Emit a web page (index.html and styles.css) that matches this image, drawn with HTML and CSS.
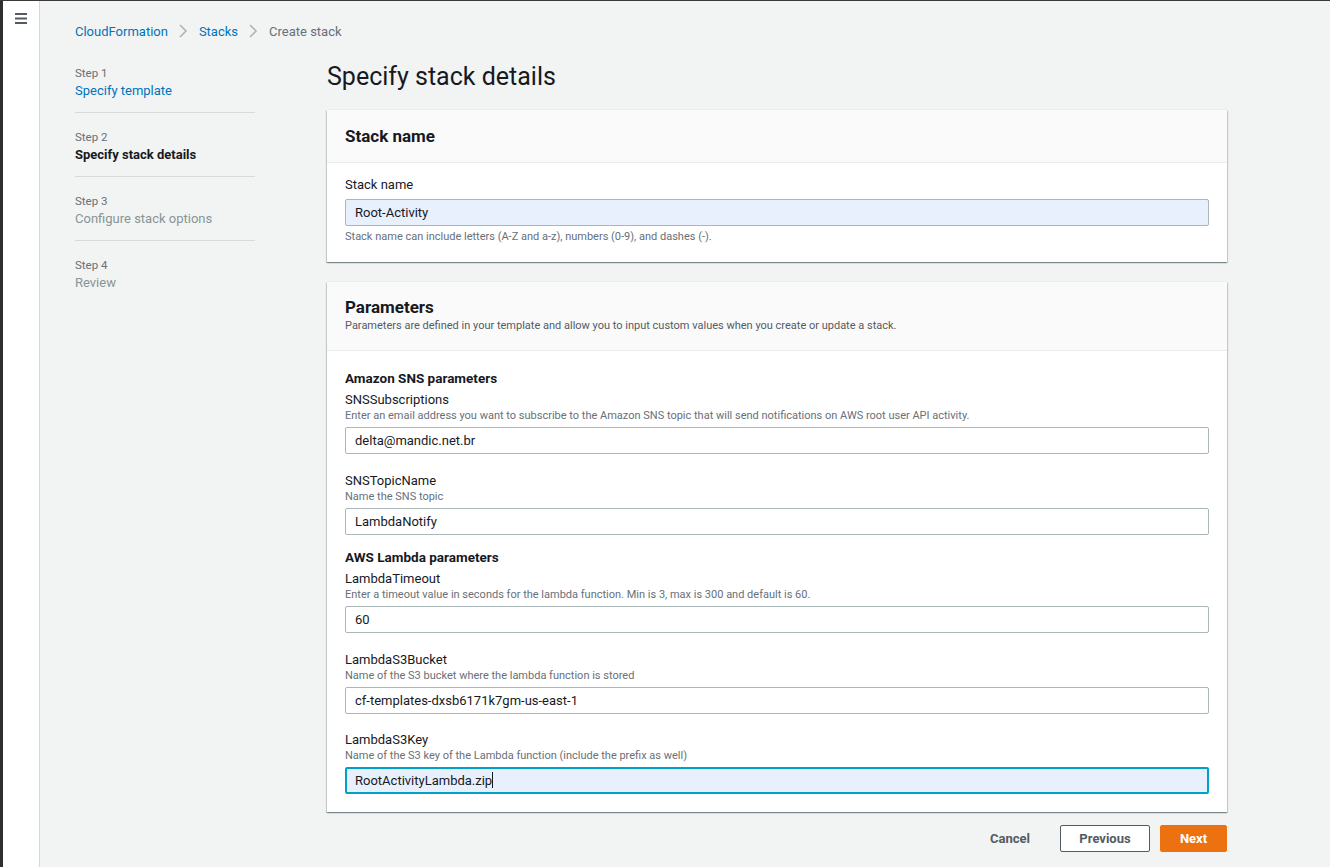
FILE: index.html
```html
<!DOCTYPE html>
<html lang="en">
<head>
<meta charset="utf-8">
<title>Create stack - CloudFormation</title>
<link rel="stylesheet" href="styles.css">
</head>
<body>
<div class="app">
  <aside class="rail">
    <button class="menu" aria-label="Open navigation">
      <svg width="12" height="11" viewBox="0 0 12 11"><rect x="0" y="0" width="12" height="2" fill="#545b64"/><rect x="0" y="4.5" width="12" height="2" fill="#545b64"/><rect x="0" y="9" width="12" height="2" fill="#545b64"/></svg>
    </button>
  </aside>
  <div class="content">
    <nav class="crumbs">
      <a class="crumb-link" href="#">CloudFormation</a>
      <svg class="chev" width="10" height="16" viewBox="0 0 10 16"><path d="M2 2l6 6-6 6" fill="none" stroke="#aab7b8" stroke-width="1.6"/></svg>
      <a class="crumb-link" href="#">Stacks</a>
      <svg class="chev" width="10" height="16" viewBox="0 0 10 16"><path d="M2 2l6 6-6 6" fill="none" stroke="#aab7b8" stroke-width="1.6"/></svg>
      <span class="crumb-current">Create stack</span>
    </nav>
    <div class="layout">
      <ol class="steps">
        <li class="step"><div class="step-num">Step 1</div><a class="step-name link" href="#">Specify template</a></li>
        <li class="step"><div class="step-num">Step 2</div><div class="step-name current">Specify stack details</div></li>
        <li class="step"><div class="step-num">Step 3</div><div class="step-name disabled">Configure stack options</div></li>
        <li class="step last"><div class="step-num">Step 4</div><div class="step-name disabled">Review</div></li>
      </ol>
      <main class="main">
        <h1 class="title">Specify stack details</h1>
        <section class="card">
          <header class="card-head"><h2 class="card-title">Stack name</h2></header>
          <div class="card-body first">
            <label class="label">Stack name</label>
            <input class="input filled" value="Root-Activity">
            <div class="hint hint-below">Stack name can include letters (A-Z and a-z), numbers (0-9), and dashes (-).</div>
          </div>
        </section>
        <section class="card">
          <header class="card-head two">
            <h2 class="card-title">Parameters</h2>
            <p class="card-desc">Parameters are defined in your template and allow you to input custom values when you create or update a stack.</p>
          </header>
          <div class="card-body params">
            <h3 class="group">Amazon SNS parameters</h3>
            <div class="field">
              <label class="label">SNSSubscriptions</label>
              <div class="hint">Enter an email address you want to subscribe to the Amazon SNS topic that will send notifications on AWS root user API activity.</div>
              <input class="input" value="delta@mandic.net.br">
            </div>
            <div class="field">
              <label class="label">SNSTopicName</label>
              <div class="hint">Name the SNS topic</div>
              <input class="input" value="LambdaNotify">
            </div>
            <h3 class="group g2">AWS Lambda parameters</h3>
            <div class="field">
              <label class="label">LambdaTimeout</label>
              <div class="hint">Enter a timeout value in seconds for the lambda function. Min is 3, max is 300 and default is 60.</div>
              <input class="input" value="60">
            </div>
            <div class="field">
              <label class="label">LambdaS3Bucket</label>
              <div class="hint">Name of the S3 bucket where the lambda function is stored</div>
              <input class="input" value="cf-templates-dxsb6171k7gm-us-east-1">
            </div>
            <div class="field last-field">
              <label class="label">LambdaS3Key</label>
              <div class="hint">Name of the S3 key of the Lambda function (include the prefix as well)</div>
              <div class="input filled focused">RootActivityLambda.zip<span class="caret"></span></div>
            </div>
          </div>
        </section>
        <div class="actions">
          <button class="btn btn-link">Cancel</button>
          <button class="btn btn-normal">Previous</button>
          <button class="btn btn-primary">Next</button>
        </div>
      </main>
    </div>
  </div>
</div>
</body>
</html>
```

FILE: styles.css
```css
* { box-sizing: border-box; }
html, body { margin: 0; padding: 0; }
body {
  font-family: Roboto, "Noto Sans", "Liberation Sans", sans-serif;
  background: #f2f3f3;
  color: #16191f;
  font-size: 13px;
  border-top: 1px solid #3a3a3a;
}
.app {
  display: flex;
  min-height: 866px;
  border-left: 3px solid #2f2f2f;
}
.rail {
  width: 37px;
  flex: none;
  background: #fff;
  border-right: 1px solid #d5dbdb;
}
.menu {
  border: 0;
  background: none;
  padding: 0;
  margin: 12px 0 0 12px;
  display: block;
  line-height: 0;
}
.content {
  flex: 1;
  padding: 19px 35px 0 35px;
}
.crumbs {
  display: flex;
  align-items: center;
  height: 22px;
  font-size: 13px;
}
.crumb-link { color: #0073bb; text-decoration: none; }
.crumb-current { color: #687078; }
.chev { margin: 0 11px 0 10px; }
.layout {
  display: grid;
  grid-template-columns: 180px 900px;
  column-gap: 72px;
  margin-top: 20px;
}
.steps {
  list-style: none;
  margin: 0;
  padding: 3px 0 0 0;
}
.step {
  padding: 0 0 12px 0;
  border-bottom: 1px solid #d5dbdb;
  margin-bottom: 16px;
}
.step.last { border-bottom: 0; }
.step-num {
  font-size: 11.5px;
  line-height: 16px;
  color: #687078;
}
.step-name {
  display: block;
  font-size: 13px;
  line-height: 19px;
}
.step-name.link { color: #0073bb; text-decoration: none; }
.step-name.current { font-weight: 700; color: #16191f; }
.step-name.disabled { color: #879596; }
.title {
  margin: 0;
  font-size: 25px;
  line-height: 30px;
  font-weight: 400;
  color: #16191f;
}
.card {
  background: #fff;
  margin-top: 18px;
  box-shadow: 0 1px 1px 0 rgba(0,28,36,0.3), 1px 1px 1px 0 rgba(0,28,36,0.15), -1px 1px 1px 0 rgba(0,28,36,0.15), 0 -1px 0 0 #eaeded;
}
.card + .card { margin-top: 20px; }
.card-head {
  background: #fafafa;
  border-bottom: 1px solid #eaeded;
  padding: 15px 18px 15px;
}
.card-head.two { padding: 14px 18px 16px; }
.card-title {
  margin: 0;
  font-size: 17px;
  line-height: 22px;
  font-weight: 700;
}
.card-desc {
  margin: 0;
  font-size: 11px;
  line-height: 16px;
  color: #545b64;
}
.card-body { padding: 12px 18px 17px; }
.card-body.params { padding: 17px 18px 17px; }
.label {
  display: block;
  font-size: 13px;
  line-height: 20px;
  color: #16191f;
}
.params .label { line-height: 18px; }
.input {
  display: block;
  width: 100%;
  height: 27px;
  margin-top: 4px;
  border: 1px solid #aab7b8;
  border-radius: 2px;
  background: #fff;
  font: inherit;
  font-size: 13px;
  color: #16191f;
  padding: 0 9px;
  line-height: 25px;
  outline: none;
}
.input.filled { background: #e8f0fe; }
.input.focused {
  border: 2px solid #00a1c9;
  padding: 0 8px;
  line-height: 23px;
}
.caret {
  display: inline-block;
  width: 1px;
  height: 16px;
  background: #16191f;
  vertical-align: -3px;
}
.hint {
  font-size: 11px;
  line-height: 14px;
  color: #687078;
}
.hint-below { margin-top: 3px; line-height: 16px; }
.group {
  margin: 0;
  font-size: 13.5px;
  line-height: 20px;
  font-weight: 700;
}
.group.g2 { margin-top: 12px; }
.field { margin-top: 18px; }
.field.last-field { margin-top: 17px; }
.group + .field { margin-top: 3px; }
.field .input { margin-top: 4px; }
.card-body.params { padding-bottom: 18px; }
.actions {
  display: flex;
  justify-content: flex-end;
  align-items: center;
  gap: 10px;
  margin-top: 13px;
}
.btn {
  font: inherit;
  font-size: 13px;
  font-weight: 700;
  height: 27px;
  border-radius: 2px;
  padding: 0 19px;
  cursor: pointer;
}
.btn-link {
  border: 1px solid transparent;
  background: none;
  color: #545b64;
}
.btn-normal {
  border: 1px solid #545b64;
  background: #fff;
  color: #545b64;
  width: 90px;
  padding: 0;
}
.btn-primary {
  border: 1px solid #ec7211;
  background: #ec7211;
  color: #fff;
  width: 67px;
  padding: 0;
}
```
